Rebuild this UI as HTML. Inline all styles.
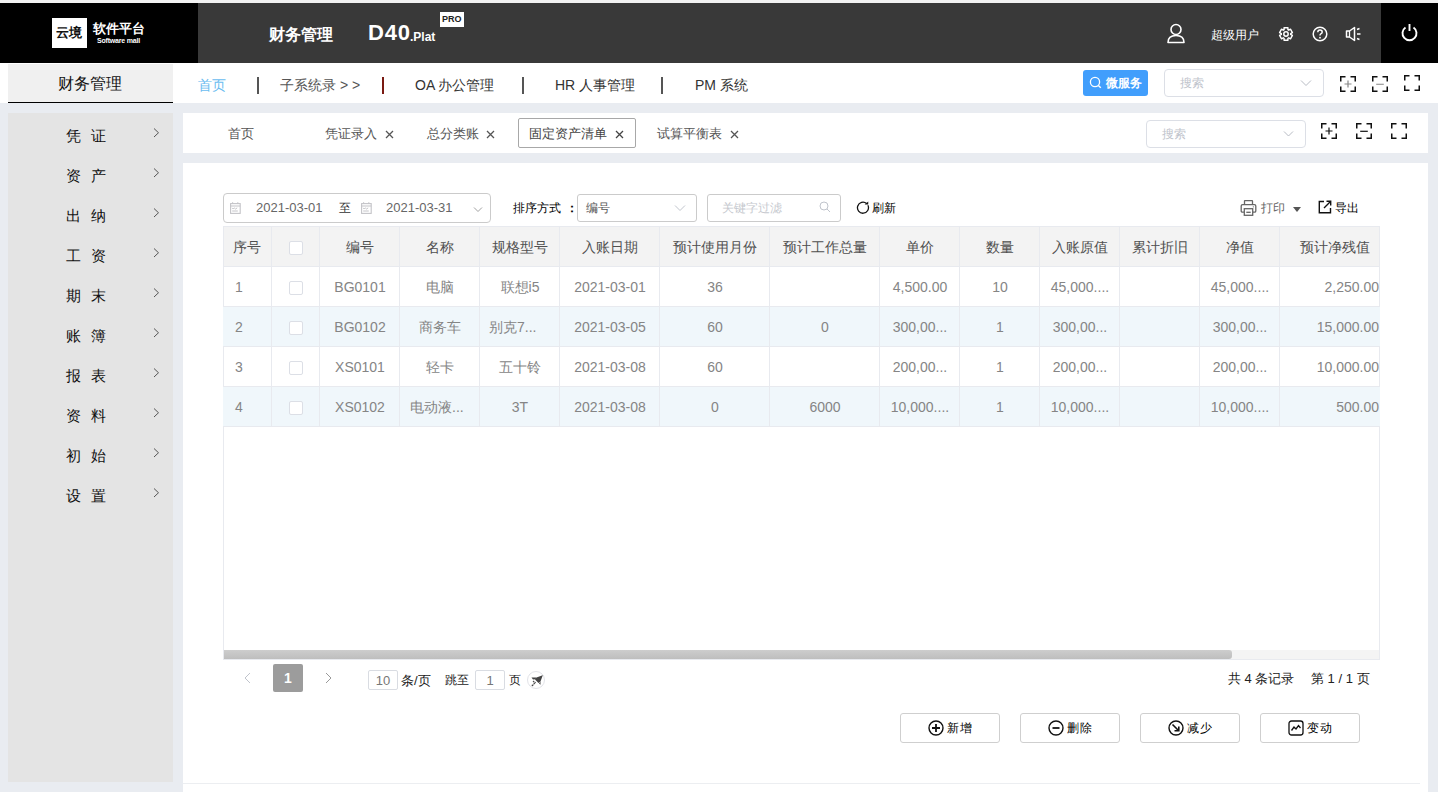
<!DOCTYPE html>
<html><head><meta charset="utf-8">
<style>
*{box-sizing:border-box;margin:0;padding:0}
html,body{width:1438px;height:792px;overflow:hidden}
body{position:relative;background:#e9ecf1;font-family:"Liberation Sans",sans-serif;color:#333}
.a{position:absolute}
.t{position:absolute;white-space:nowrap;line-height:1}
</style></head><body>
<div class="a" style="left:0px;top:0px;width:1438px;height:3px;background:#f2f2f2"></div>
<div class="a" style="left:0px;top:3px;width:1438px;height:60px;background:#393939"></div>
<div class="a" style="left:0px;top:3px;width:198px;height:60px;background:#000"></div>
<div class="a" style="left:1381px;top:3px;width:57px;height:60px;background:#000"></div>
<div class="a" style="left:0px;top:63px;width:1438px;height:40px;background:#fff"></div>
<div class="a" style="left:8px;top:64px;width:165px;height:39px;background:#f0f0f0;border-bottom:1px solid #000"></div>
<div class="a" style="left:8px;top:113px;width:165px;height:669px;background:#e4e4e4"></div>
<div class="a" style="left:183px;top:113px;width:1245px;height:40px;background:#fff"></div>
<div class="a" style="left:183px;top:163px;width:1245px;height:629px;background:#fff"></div>
<div class="a" style="left:183px;top:153px;width:1237px;height:10px;background:#e9ecf1"></div>
<div class="a" style="left:183px;top:783px;width:1237px;height:1px;background:#eceef1"></div>
<div class="a" style="left:52px;top:18px;width:35px;height:30px;background:#fff"></div>
<div class="t" style="left:56px;top:26px;font-size:13px;color:#111;font-weight:bold">云境</div>
<div class="t" style="left:93px;top:22px;font-size:13px;color:#fff;font-weight:bold">软件平台</div>
<div class="t" style="left:97px;top:37px;font-size:7px;color:#fff;font-weight:bold;letter-spacing:-0.2px">Software mall</div>
<div class="t" style="left:269px;top:27px;font-size:16px;color:#fff;font-weight:bold">财务管理</div>
<div class="t" style="left:368px;top:22px;font-size:22px;color:#fff;font-weight:bold;letter-spacing:0.8px">D40</div>
<div class="t" style="left:410px;top:31px;font-size:12px;color:#fff;font-weight:bold">.Plat</div>
<div class="a" style="left:440px;top:12px;width:24px;height:15px;background:#fff"></div>
<div class="t" style="left:442px;top:15px;font-size:9px;color:#222;font-weight:bold">PRO</div>
<svg class="a" style="left:1166px;top:23px" width="20" height="21" viewBox="0 0 20 21"><circle cx="10" cy="6.5" r="5" fill="none" stroke="#fff" stroke-width="1.6"/><path d="M2 19.5 Q2 12.5 10 12.5 Q18 12.5 18 19.5 Z" fill="none" stroke="#fff" stroke-width="1.6" stroke-linejoin="round"/></svg>
<div class="t" style="left:1211px;top:29px;font-size:12px;color:#fff;">超级用户</div>
<svg class="a" style="left:1278px;top:26px" width="16" height="16" viewBox="0 0 16 16"><path d="M5.40 3.50 L5.88 3.25 L5.84 1.03 L10.16 1.03 L10.12 3.25 L10.60 3.50 L11.05 3.79 L12.96 2.64 L15.12 6.38 L13.17 7.46 L13.20 8.00 L13.17 8.54 L15.12 9.62 L12.96 13.36 L11.05 12.21 L10.60 12.50 L10.12 12.75 L10.16 14.97 L5.84 14.97 L5.88 12.75 L5.40 12.50 L4.95 12.21 L3.04 13.36 L0.88 9.62 L2.83 8.54 L2.80 8.00 L2.83 7.46 L0.88 6.38 L3.04 2.64 L4.95 3.79 Z" transform="translate(8 8) scale(0.9) translate(-8 -8)" fill="none" stroke="#fff" stroke-width="1.6" stroke-linejoin="round"/><circle cx="8" cy="8" r="2.2" fill="none" stroke="#fff" stroke-width="1.5"/></svg>
<svg class="a" style="left:1312px;top:26px" width="16" height="16" viewBox="0 0 16 16"><circle cx="8" cy="8" r="6.8" fill="none" stroke="#fff" stroke-width="1.5"/><path d="M5.8 6.2 Q5.8 4 8 4 Q10.2 4 10.2 6 Q10.2 7.3 8.8 7.9 Q8 8.3 8 9.6" fill="none" stroke="#fff" stroke-width="1.5"/><circle cx="8" cy="11.7" r="0.9" fill="#fff"/></svg>
<svg class="a" style="left:1345px;top:26px" width="17" height="16" viewBox="0 0 17 16"><path d="M1.5 5 H4.5 L9.5 1.5 V14.5 L4.5 11 H1.5 Z" fill="none" stroke="#fff" stroke-width="1.5" stroke-linejoin="round"/><path d="M4.5 5 V11" stroke="#fff" stroke-width="1.3"/><path d="M12 3.5 L14.5 2.5 M12 8 H15.5 M12 12.5 L14.5 13.5" stroke="#fff" stroke-width="1.4"/></svg>
<svg class="a" style="left:1400px;top:23px" width="19" height="20" viewBox="0 0 19 20"><path d="M5.5 4.46 A7 7 0 1 0 13.5 4.46" fill="none" stroke="#fff" stroke-width="1.9" stroke-linecap="butt"/><path d="M9.5 1 V8" stroke="#fff" stroke-width="1.9"/></svg>
<div class="t" style="left:58px;top:76px;font-size:16px;color:#111;">财务管理</div>
<div class="t" style="left:198px;top:78px;font-size:14px;color:#6abcf0;">首页</div>
<div class="a" style="left:257px;top:77px;width:2px;height:17px;background:#555"></div>
<div class="t" style="left:280px;top:78px;font-size:14px;color:#555;">子系统录 &gt; &gt;</div>
<div class="a" style="left:382px;top:77px;width:2px;height:17px;background:#7a1a12"></div>
<div class="t" style="left:415px;top:78px;font-size:14px;color:#333;">OA 办公管理</div>
<div class="a" style="left:522px;top:77px;width:2px;height:17px;background:#555"></div>
<div class="t" style="left:555px;top:78px;font-size:14px;color:#333;">HR 人事管理</div>
<div class="a" style="left:661px;top:77px;width:2px;height:17px;background:#555"></div>
<div class="t" style="left:695px;top:78px;font-size:14px;color:#333;">PM 系统</div>
<div class="a" style="left:1083px;top:70px;width:65px;height:26px;background:#419efc;border-radius:3px"></div>
<svg class="a" style="left:1089px;top:76px" width="13" height="13" viewBox="0 0 13 13"><circle cx="6" cy="6" r="4.6" fill="none" stroke="#fff" stroke-width="1.3"/><path d="M9.4 9.4 L11.8 11.8" stroke="#fff" stroke-width="1.4"/></svg>
<div class="t" style="left:1106px;top:77px;font-size:12px;color:#fff;font-weight:bold">微服务</div>
<div class="a" style="left:1164px;top:69px;width:160px;height:28px;border:1px solid #dcdfe6;border-radius:4px;background:#fff"></div>
<div class="t" style="left:1180px;top:77px;font-size:12px;color:#c0c4cc;">搜索</div>
<svg class="a" style="left:1300px;top:79px" width="12" height="8" viewBox="0 0 12 8"><path d="M1 1.5 L6 6.5 L11 1.5" fill="none" stroke="#b8bcc4" stroke-width="1"/></svg>
<div class="t" style="left:66px;top:128px;font-size:15px;color:#111;">凭</div>
<div class="t" style="left:91px;top:128px;font-size:15px;color:#111;">证</div>
<svg class="a" style="left:153px;top:128px" width="7" height="10" viewBox="0 0 7 10"><path d="M1 0.5 L5.5 4.75 L1 9" fill="none" stroke="#555" stroke-width="1"/></svg>
<div class="t" style="left:66px;top:168px;font-size:15px;color:#111;">资</div>
<div class="t" style="left:91px;top:168px;font-size:15px;color:#111;">产</div>
<svg class="a" style="left:153px;top:168px" width="7" height="10" viewBox="0 0 7 10"><path d="M1 0.5 L5.5 4.75 L1 9" fill="none" stroke="#555" stroke-width="1"/></svg>
<div class="t" style="left:66px;top:208px;font-size:15px;color:#111;">出</div>
<div class="t" style="left:91px;top:208px;font-size:15px;color:#111;">纳</div>
<svg class="a" style="left:153px;top:208px" width="7" height="10" viewBox="0 0 7 10"><path d="M1 0.5 L5.5 4.75 L1 9" fill="none" stroke="#555" stroke-width="1"/></svg>
<div class="t" style="left:66px;top:248px;font-size:15px;color:#111;">工</div>
<div class="t" style="left:91px;top:248px;font-size:15px;color:#111;">资</div>
<svg class="a" style="left:153px;top:248px" width="7" height="10" viewBox="0 0 7 10"><path d="M1 0.5 L5.5 4.75 L1 9" fill="none" stroke="#555" stroke-width="1"/></svg>
<div class="t" style="left:66px;top:288px;font-size:15px;color:#111;">期</div>
<div class="t" style="left:91px;top:288px;font-size:15px;color:#111;">末</div>
<svg class="a" style="left:153px;top:288px" width="7" height="10" viewBox="0 0 7 10"><path d="M1 0.5 L5.5 4.75 L1 9" fill="none" stroke="#555" stroke-width="1"/></svg>
<div class="t" style="left:66px;top:328px;font-size:15px;color:#111;">账</div>
<div class="t" style="left:91px;top:328px;font-size:15px;color:#111;">簿</div>
<svg class="a" style="left:153px;top:328px" width="7" height="10" viewBox="0 0 7 10"><path d="M1 0.5 L5.5 4.75 L1 9" fill="none" stroke="#555" stroke-width="1"/></svg>
<div class="t" style="left:66px;top:368px;font-size:15px;color:#111;">报</div>
<div class="t" style="left:91px;top:368px;font-size:15px;color:#111;">表</div>
<svg class="a" style="left:153px;top:368px" width="7" height="10" viewBox="0 0 7 10"><path d="M1 0.5 L5.5 4.75 L1 9" fill="none" stroke="#555" stroke-width="1"/></svg>
<div class="t" style="left:66px;top:408px;font-size:15px;color:#111;">资</div>
<div class="t" style="left:91px;top:408px;font-size:15px;color:#111;">料</div>
<svg class="a" style="left:153px;top:408px" width="7" height="10" viewBox="0 0 7 10"><path d="M1 0.5 L5.5 4.75 L1 9" fill="none" stroke="#555" stroke-width="1"/></svg>
<div class="t" style="left:66px;top:448px;font-size:15px;color:#111;">初</div>
<div class="t" style="left:91px;top:448px;font-size:15px;color:#111;">始</div>
<svg class="a" style="left:153px;top:448px" width="7" height="10" viewBox="0 0 7 10"><path d="M1 0.5 L5.5 4.75 L1 9" fill="none" stroke="#555" stroke-width="1"/></svg>
<div class="t" style="left:66px;top:488px;font-size:15px;color:#111;">设</div>
<div class="t" style="left:91px;top:488px;font-size:15px;color:#111;">置</div>
<svg class="a" style="left:153px;top:488px" width="7" height="10" viewBox="0 0 7 10"><path d="M1 0.5 L5.5 4.75 L1 9" fill="none" stroke="#555" stroke-width="1"/></svg>
<div class="t" style="left:228px;top:127px;font-size:13px;color:#555;">首页</div>
<div class="t" style="left:325px;top:127px;font-size:13px;color:#555;">凭证录入</div>
<svg class="a" style="left:385px;top:130px" width="9" height="9" viewBox="0 0 9 9"><path d="M1 1 L8 8 M8 1 L1 8" stroke="#555" stroke-width="1.3"/></svg>
<div class="t" style="left:427px;top:127px;font-size:13px;color:#555;">总分类账</div>
<svg class="a" style="left:486px;top:130px" width="9" height="9" viewBox="0 0 9 9"><path d="M1 1 L8 8 M8 1 L1 8" stroke="#555" stroke-width="1.3"/></svg>
<div class="a" style="left:518px;top:118px;width:118px;height:30px;border:1px solid #a8a8a8;border-radius:2px"></div>
<div class="t" style="left:529px;top:127px;font-size:13px;color:#444;">固定资产清单</div>
<svg class="a" style="left:615px;top:130px" width="9" height="9" viewBox="0 0 9 9"><path d="M1 1 L8 8 M8 1 L1 8" stroke="#444" stroke-width="1.3"/></svg>
<div class="t" style="left:657px;top:127px;font-size:13px;color:#555;">试算平衡表</div>
<svg class="a" style="left:730px;top:130px" width="9" height="9" viewBox="0 0 9 9"><path d="M1 1 L8 8 M8 1 L1 8" stroke="#555" stroke-width="1.3"/></svg>
<div class="a" style="left:1146px;top:120px;width:160px;height:28px;border:1px solid #dcdfe6;border-radius:4px;background:#fff"></div>
<div class="t" style="left:1162px;top:128px;font-size:12px;color:#c0c4cc;">搜索</div>
<svg class="a" style="left:1283px;top:130px" width="12" height="8" viewBox="0 0 12 8"><path d="M1 1.5 L5.5 6 L10 1.5" fill="none" stroke="#b8bcc4" stroke-width="1"/></svg>
<svg class="a" style="left:1340px;top:76px" width="16" height="16" viewBox="0 0 16 16"><path d="M0.75 5.5 V0.75 H5.5 M10.5 0.75 H15.25 V5.5 M15.25 10.5 V15.25 H10.5 M5.5 15.25 H0.75 V10.5" fill="none" stroke="#111" stroke-width="1.5"/><path d="M8 4.5 V11.5 M4.5 8 H11.5" stroke="#888" stroke-width="1.2"/></svg>
<svg class="a" style="left:1372px;top:76px" width="16" height="16" viewBox="0 0 16 16"><path d="M0.75 5.5 V0.75 H5.5 M10.5 0.75 H15.25 V5.5 M15.25 10.5 V15.25 H10.5 M5.5 15.25 H0.75 V10.5" fill="none" stroke="#111" stroke-width="1.5"/><path d="M4.2 8.3 H11.8" stroke="#999" stroke-width="1.2"/></svg>
<svg class="a" style="left:1404px;top:75px" width="16" height="16" viewBox="0 0 16 16"><path d="M0.75 5.5 V0.75 H5.5 M10.5 0.75 H15.25 V5.5 M15.25 10.5 V15.25 H10.5 M5.5 15.25 H0.75 V10.5" fill="none" stroke="#111" stroke-width="1.5"/></svg>
<svg class="a" style="left:1321px;top:123px" width="16" height="16" viewBox="0 0 16 16"><path d="M0.75 5.5 V0.75 H5.5 M10.5 0.75 H15.25 V5.5 M15.25 10.5 V15.25 H10.5 M5.5 15.25 H0.75 V10.5" fill="none" stroke="#111" stroke-width="1.5"/><path d="M8 4.5 V11.5 M4.5 8 H11.5" stroke="#111" stroke-width="1.2"/></svg>
<svg class="a" style="left:1356px;top:123px" width="16" height="16" viewBox="0 0 16 16"><path d="M0.75 5.5 V0.75 H5.5 M10.5 0.75 H15.25 V5.5 M15.25 10.5 V15.25 H10.5 M5.5 15.25 H0.75 V10.5" fill="none" stroke="#111" stroke-width="1.5"/><path d="M4.2 8.3 H11.8" stroke="#111" stroke-width="1.2"/></svg>
<svg class="a" style="left:1391px;top:123px" width="16" height="16" viewBox="0 0 16 16"><path d="M0.75 5.5 V0.75 H5.5 M10.5 0.75 H15.25 V5.5 M15.25 10.5 V15.25 H10.5 M5.5 15.25 H0.75 V10.5" fill="none" stroke="#111" stroke-width="1.5"/></svg>
<div class="a" style="left:223px;top:193px;width:268px;height:30px;border:1px solid #cbcbcb;border-radius:4px"></div>
<svg class="a" style="left:230px;top:202px" width="11" height="12" viewBox="0 0 11 12"><rect x="0.6" y="1.6" width="9.6" height="9.8" fill="none" stroke="#c4c4c8" stroke-width="1.1"/><path d="M0.6 4 H10.2 M2.6 0.3 V2 M7.8 0.3 V2" stroke="#c4c4c8" stroke-width="1.1"/><path d="M2.2 5.9 L3.2 7 L4.3 5.9 L5.5 7 L7.2 5.9 M2.2 9 H7.8" fill="none" stroke="#c4c4c8" stroke-width="1"/></svg>
<svg class="a" style="left:361px;top:202px" width="11" height="12" viewBox="0 0 11 12"><rect x="0.6" y="1.6" width="9.6" height="9.8" fill="none" stroke="#c4c4c8" stroke-width="1.1"/><path d="M0.6 4 H10.2 M2.6 0.3 V2 M7.8 0.3 V2" stroke="#c4c4c8" stroke-width="1.1"/><path d="M2.2 5.9 L3.2 7 L4.3 5.9 L5.5 7 L7.2 5.9 M2.2 9 H7.8" fill="none" stroke="#c4c4c8" stroke-width="1"/></svg>
<div class="t" style="left:256px;top:201px;font-size:13px;color:#666;">2021-03-01</div>
<div class="t" style="left:339px;top:202px;font-size:12px;color:#333;">至</div>
<div class="t" style="left:386px;top:201px;font-size:13px;color:#666;">2021-03-31</div>
<svg class="a" style="left:473px;top:207px" width="10" height="6" viewBox="0 0 10 6"><path d="M1 0.5 L5 4.5 L9 0.5" fill="none" stroke="#a0a0a0" stroke-width="1"/></svg>
<div class="t" style="left:513px;top:202px;font-size:12px;color:#000;">排序方式</div>
<div class="t" style="left:566px;top:202px;font-size:12px;color:#000;font-weight:bold">：</div>
<div class="a" style="left:577px;top:194px;width:120px;height:28px;border:1px solid #cbcbcb;border-radius:3px"></div>
<div class="t" style="left:586px;top:202px;font-size:12px;color:#555;">编号</div>
<svg class="a" style="left:674px;top:205px" width="12" height="7" viewBox="0 0 12 7"><path d="M1 0.5 L6 5.5 L11 0.5" fill="none" stroke="#c0c4cc" stroke-width="1"/></svg>
<div class="a" style="left:707px;top:194px;width:134px;height:28px;border:1px solid #cbcbcb;border-radius:3px"></div>
<div class="t" style="left:722px;top:202px;font-size:12px;color:#c5c8ce;">关键字过滤</div>
<svg class="a" style="left:819px;top:201px" width="12" height="12" viewBox="0 0 12 12"><circle cx="5" cy="5" r="4" fill="none" stroke="#c0c4cc" stroke-width="1"/><path d="M8 8 L11 11" stroke="#c0c4cc" stroke-width="1"/></svg>
<svg class="a" style="left:856px;top:201px" width="14" height="14" viewBox="0 0 14 14"><path d="M10.6 2.6 A5.5 5.5 0 1 0 11.9 4.3" fill="none" stroke="#111" stroke-width="1.3"/><path d="M8.6 3.4 L12.2 3.6 L12.3 0.6 Z" fill="#111"/></svg>
<div class="t" style="left:872px;top:202px;font-size:12px;color:#000;">刷新</div>
<svg class="a" style="left:1240px;top:200px" width="17" height="16" viewBox="0 0 17 16"><path d="M4.5 4.5 V1.2 Q4.5 0.7 5 0.7 H12 Q12.5 0.7 12.5 1.2 V4.5" fill="none" stroke="#666" stroke-width="1.3"/><path d="M4 12.2 H2.5 Q1.2 12.2 1.2 10.9 V6 Q1.2 4.6 2.6 4.6 H14.4 Q15.8 4.6 15.8 6 V10.9 Q15.8 12.2 14.5 12.2 H13" fill="none" stroke="#666" stroke-width="1.3"/><rect x="4.3" y="8.7" width="8.4" height="6.6" fill="none" stroke="#666" stroke-width="1.3"/><path d="M6.3 12.3 H10.7" stroke="#666" stroke-width="1.3"/><circle cx="13.3" cy="6.8" r="0.6" fill="#666"/></svg>
<div class="t" style="left:1261px;top:202px;font-size:12px;color:#666;">打印</div>
<svg class="a" style="left:1293px;top:207px" width="8" height="5" viewBox="0 0 8 5"><path d="M0 0 H8 L4 5 Z" fill="#555"/></svg>
<svg class="a" style="left:1318px;top:200px" width="14" height="14" viewBox="0 0 14 14"><path d="M6 1.5 H1.3 V12.7 H12.5 V8" fill="none" stroke="#111" stroke-width="1.4"/><path d="M6 8 L12.5 1.5 M8.5 1.3 H12.7 V5.5" fill="none" stroke="#111" stroke-width="1.4"/></svg>
<div class="t" style="left:1335px;top:202px;font-size:12px;color:#000;">导出</div>
<div class="a" style="left:223px;top:226px;width:1157px;height:40px;background:#f3f3f3"></div>
<div class="a" style="left:223px;top:226px;width:1157px;height:434px;border:1px solid #e8eaef"></div>
<div class="a" style="left:223px;top:306px;width:1157px;height:40px;background:#f0f7fb"></div>
<div class="a" style="left:223px;top:386px;width:1157px;height:40px;background:#f0f7fb"></div>
<div class="a" style="left:271px;top:226px;width:1px;height:200px;background:#e8eaef"></div>
<div class="a" style="left:319px;top:226px;width:1px;height:200px;background:#e8eaef"></div>
<div class="a" style="left:399px;top:226px;width:1px;height:200px;background:#e8eaef"></div>
<div class="a" style="left:479px;top:226px;width:1px;height:200px;background:#e8eaef"></div>
<div class="a" style="left:559px;top:226px;width:1px;height:200px;background:#e8eaef"></div>
<div class="a" style="left:659px;top:226px;width:1px;height:200px;background:#e8eaef"></div>
<div class="a" style="left:769px;top:226px;width:1px;height:200px;background:#e8eaef"></div>
<div class="a" style="left:879px;top:226px;width:1px;height:200px;background:#e8eaef"></div>
<div class="a" style="left:959px;top:226px;width:1px;height:200px;background:#e8eaef"></div>
<div class="a" style="left:1039px;top:226px;width:1px;height:200px;background:#e8eaef"></div>
<div class="a" style="left:1119px;top:226px;width:1px;height:200px;background:#e8eaef"></div>
<div class="a" style="left:1199px;top:226px;width:1px;height:200px;background:#e8eaef"></div>
<div class="a" style="left:1279px;top:226px;width:1px;height:200px;background:#e8eaef"></div>
<div class="a" style="left:223px;top:266px;width:1157px;height:1px;background:#e8eaef"></div>
<div class="a" style="left:223px;top:306px;width:1157px;height:1px;background:#e8eaef"></div>
<div class="a" style="left:223px;top:346px;width:1157px;height:1px;background:#e8eaef"></div>
<div class="a" style="left:223px;top:386px;width:1157px;height:1px;background:#e8eaef"></div>
<div class="a" style="left:223px;top:426px;width:1157px;height:1px;background:#e8eaef"></div>
<div class="t" style="left:233px;top:240px;font-size:14px;color:#505050;">序号</div>
<div class="t" style="left:320px;top:240px;width:80px;text-align:center;font-size:14px;color:#505050">编号</div>
<div class="t" style="left:400px;top:240px;width:80px;text-align:center;font-size:14px;color:#505050">名称</div>
<div class="t" style="left:480px;top:240px;width:80px;text-align:center;font-size:14px;color:#505050">规格型号</div>
<div class="t" style="left:560px;top:240px;width:100px;text-align:center;font-size:14px;color:#505050">入账日期</div>
<div class="t" style="left:660px;top:240px;width:110px;text-align:center;font-size:14px;color:#505050">预计使用月份</div>
<div class="t" style="left:770px;top:240px;width:110px;text-align:center;font-size:14px;color:#505050">预计工作总量</div>
<div class="t" style="left:880px;top:240px;width:80px;text-align:center;font-size:14px;color:#505050">单价</div>
<div class="t" style="left:960px;top:240px;width:80px;text-align:center;font-size:14px;color:#505050">数量</div>
<div class="t" style="left:1040px;top:240px;width:80px;text-align:center;font-size:14px;color:#505050">入账原值</div>
<div class="t" style="left:1120px;top:240px;width:80px;text-align:center;font-size:14px;color:#505050">累计折旧</div>
<div class="t" style="left:1200px;top:240px;width:80px;text-align:center;font-size:14px;color:#505050">净值</div>
<div class="t" style="left:1300px;top:240px;font-size:14px;color:#505050;">预计净残值</div>
<div class="a" style="left:289px;top:241px;width:14px;height:14px;border:1px solid #dcdfe6;border-radius:2px;background:#fff"></div>
<div class="t" style="left:235px;top:280px;font-size:14px;color:#858585;">1</div>
<div class="t" style="left:320px;top:280px;width:80px;text-align:center;font-size:14px;color:#858585">BG0101</div>
<div class="t" style="left:400px;top:280px;width:80px;text-align:center;font-size:14px;color:#858585">电脑</div>
<div class="t" style="left:480px;top:280px;width:80px;text-align:center;font-size:14px;color:#858585">联想i5</div>
<div class="t" style="left:560px;top:280px;width:100px;text-align:center;font-size:14px;color:#858585">2021-03-01</div>
<div class="t" style="left:660px;top:280px;width:110px;text-align:center;font-size:14px;color:#858585">36</div>
<div class="t" style="left:880px;top:280px;width:80px;text-align:center;font-size:14px;color:#858585">4,500.00</div>
<div class="t" style="left:960px;top:280px;width:80px;text-align:center;font-size:14px;color:#858585">10</div>
<div class="t" style="left:1040px;top:280px;width:80px;text-align:center;font-size:14px;color:#858585">45,000....</div>
<div class="t" style="left:1200px;top:280px;width:80px;text-align:center;font-size:14px;color:#858585">45,000....</div>
<div class="t" style="left:1279px;top:280px;width:100px;text-align:right;font-size:14px;color:#858585">2,250.00</div>
<div class="a" style="left:289px;top:281px;width:14px;height:14px;border:1px solid #dcdfe6;border-radius:2px;background:#fff"></div>
<div class="t" style="left:235px;top:320px;font-size:14px;color:#858585;">2</div>
<div class="t" style="left:320px;top:320px;width:80px;text-align:center;font-size:14px;color:#858585">BG0102</div>
<div class="t" style="left:400px;top:320px;width:80px;text-align:center;font-size:14px;color:#858585">商务车</div>
<div class="t" style="left:489px;top:320px;font-size:14px;color:#858585;">别克7...</div>
<div class="t" style="left:560px;top:320px;width:100px;text-align:center;font-size:14px;color:#858585">2021-03-05</div>
<div class="t" style="left:660px;top:320px;width:110px;text-align:center;font-size:14px;color:#858585">60</div>
<div class="t" style="left:770px;top:320px;width:110px;text-align:center;font-size:14px;color:#858585">0</div>
<div class="t" style="left:880px;top:320px;width:80px;text-align:center;font-size:14px;color:#858585">300,00...</div>
<div class="t" style="left:960px;top:320px;width:80px;text-align:center;font-size:14px;color:#858585">1</div>
<div class="t" style="left:1040px;top:320px;width:80px;text-align:center;font-size:14px;color:#858585">300,00...</div>
<div class="t" style="left:1200px;top:320px;width:80px;text-align:center;font-size:14px;color:#858585">300,00...</div>
<div class="t" style="left:1279px;top:320px;width:100px;text-align:right;font-size:14px;color:#858585">15,000.00</div>
<div class="a" style="left:289px;top:321px;width:14px;height:14px;border:1px solid #dcdfe6;border-radius:2px;background:#fff"></div>
<div class="t" style="left:235px;top:360px;font-size:14px;color:#858585;">3</div>
<div class="t" style="left:320px;top:360px;width:80px;text-align:center;font-size:14px;color:#858585">XS0101</div>
<div class="t" style="left:400px;top:360px;width:80px;text-align:center;font-size:14px;color:#858585">轻卡</div>
<div class="t" style="left:480px;top:360px;width:80px;text-align:center;font-size:14px;color:#858585">五十铃</div>
<div class="t" style="left:560px;top:360px;width:100px;text-align:center;font-size:14px;color:#858585">2021-03-08</div>
<div class="t" style="left:660px;top:360px;width:110px;text-align:center;font-size:14px;color:#858585">60</div>
<div class="t" style="left:880px;top:360px;width:80px;text-align:center;font-size:14px;color:#858585">200,00...</div>
<div class="t" style="left:960px;top:360px;width:80px;text-align:center;font-size:14px;color:#858585">1</div>
<div class="t" style="left:1040px;top:360px;width:80px;text-align:center;font-size:14px;color:#858585">200,00...</div>
<div class="t" style="left:1200px;top:360px;width:80px;text-align:center;font-size:14px;color:#858585">200,00...</div>
<div class="t" style="left:1279px;top:360px;width:100px;text-align:right;font-size:14px;color:#858585">10,000.00</div>
<div class="a" style="left:289px;top:361px;width:14px;height:14px;border:1px solid #dcdfe6;border-radius:2px;background:#fff"></div>
<div class="t" style="left:235px;top:400px;font-size:14px;color:#858585;">4</div>
<div class="t" style="left:320px;top:400px;width:80px;text-align:center;font-size:14px;color:#858585">XS0102</div>
<div class="t" style="left:410px;top:400px;font-size:14px;color:#858585;">电动液...</div>
<div class="t" style="left:480px;top:400px;width:80px;text-align:center;font-size:14px;color:#858585">3T</div>
<div class="t" style="left:560px;top:400px;width:100px;text-align:center;font-size:14px;color:#858585">2021-03-08</div>
<div class="t" style="left:660px;top:400px;width:110px;text-align:center;font-size:14px;color:#858585">0</div>
<div class="t" style="left:770px;top:400px;width:110px;text-align:center;font-size:14px;color:#858585">6000</div>
<div class="t" style="left:880px;top:400px;width:80px;text-align:center;font-size:14px;color:#858585">10,000....</div>
<div class="t" style="left:960px;top:400px;width:80px;text-align:center;font-size:14px;color:#858585">1</div>
<div class="t" style="left:1040px;top:400px;width:80px;text-align:center;font-size:14px;color:#858585">10,000....</div>
<div class="t" style="left:1200px;top:400px;width:80px;text-align:center;font-size:14px;color:#858585">10,000....</div>
<div class="t" style="left:1279px;top:400px;width:100px;text-align:right;font-size:14px;color:#858585">500.00</div>
<div class="a" style="left:289px;top:401px;width:14px;height:14px;border:1px solid #dcdfe6;border-radius:2px;background:#fff"></div>
<div class="a" style="left:224px;top:650px;width:1155px;height:9px;background:#f4f4f4"></div>
<div class="a" style="left:224px;top:650px;width:1008px;height:9px;background:linear-gradient(#cdcdcd,#bebebe);border-radius:0 3px 3px 0"></div>
<svg class="a" style="left:244px;top:672px" width="7" height="12" viewBox="0 0 7 12"><path d="M6 1 L1 6 L6 11" fill="none" stroke="#c0c4cc" stroke-width="1"/></svg>
<div class="a" style="left:273px;top:664px;width:30px;height:28px;background:#9c9c9c;border-radius:2px"></div>
<div class="t" style="left:273px;top:671px;width:30px;text-align:center;font-size:14px;font-weight:bold;color:#fff">1</div>
<svg class="a" style="left:325px;top:672px" width="7" height="12" viewBox="0 0 7 12"><path d="M1 1 L6 6 L1 11" fill="none" stroke="#999" stroke-width="1"/></svg>
<div class="a" style="left:368px;top:670px;width:30px;height:20px;border:1px solid #d9dce2;border-radius:2px"></div>
<div class="t" style="left:368px;top:674px;width:30px;text-align:center;font-size:13px;color:#777">10</div>
<div class="t" style="left:401px;top:674px;font-size:13px;color:#222;">条/页</div>
<div class="t" style="left:445px;top:674px;font-size:12px;color:#222;">跳至</div>
<div class="a" style="left:475px;top:670px;width:30px;height:20px;border:1px solid #d9dce2;border-radius:2px"></div>
<div class="t" style="left:475px;top:674px;width:30px;text-align:center;font-size:13px;color:#777">1</div>
<div class="t" style="left:509px;top:674px;font-size:12px;color:#222;">页</div>
<div class="a" style="left:527px;top:671px;width:18px;height:18px;border:1px solid #e2e3e8;border-radius:50%"></div>
<svg class="a" style="left:527px;top:671px" width="18" height="18" viewBox="0 0 18 18"><path d="M16.5 4.5 L15 4.5 L9.5 6.5 L8 8.5 L11.5 12 L13.5 10.5 L15.5 5 Z" fill="#444"/><path d="M9.5 6.5 L4.5 6.5 L6 8.5 L8.5 8.2 Z M13.5 10.5 L13.5 13.8 L12 12.5 Z" fill="#444"/><path d="M8.6 11.2 L6.5 13.3 M7.2 10 L6 11.2" stroke="#444" stroke-width="1.1"/><circle cx="5.5" cy="14.3" r="0.9" fill="#444"/></svg>
<div class="t" style="left:1228px;top:672px;font-size:13px;color:#222;">共 4 条记录</div>
<div class="t" style="left:1311px;top:672px;font-size:13px;color:#222;">第 1 / 1 页</div>
<div class="a" style="left:900px;top:713px;width:100px;height:30px;border:1px solid #cfcfcf;border-radius:3px;background:#fff"></div>
<svg class="a" style="left:928px;top:720px" width="16" height="16" viewBox="0 0 16 16"><circle cx="8" cy="8" r="7" fill="none" stroke="#111" stroke-width="1.4"/><path d="M8 4 V12 M4 8 H12" stroke="#111" stroke-width="1.8"/></svg>
<div class="t" style="left:947px;top:722px;font-size:12px;color:#000;letter-spacing:1px">新增</div>
<div class="a" style="left:1020px;top:713px;width:100px;height:30px;border:1px solid #cfcfcf;border-radius:3px;background:#fff"></div>
<svg class="a" style="left:1048px;top:720px" width="16" height="16" viewBox="0 0 16 16"><circle cx="8" cy="8" r="7" fill="none" stroke="#111" stroke-width="1.4"/><path d="M4.5 8 H11.5" stroke="#111" stroke-width="1.8"/></svg>
<div class="t" style="left:1067px;top:722px;font-size:12px;color:#000;letter-spacing:1px">删除</div>
<div class="a" style="left:1140px;top:713px;width:100px;height:30px;border:1px solid #cfcfcf;border-radius:3px;background:#fff"></div>
<svg class="a" style="left:1168px;top:720px" width="16" height="16" viewBox="0 0 16 16"><circle cx="8" cy="8" r="7" fill="none" stroke="#111" stroke-width="1.4"/><path d="M4.5 4.5 L10.5 10.5 M6.5 10.8 H10.8 V6.5" fill="none" stroke="#111" stroke-width="1.6"/></svg>
<div class="t" style="left:1187px;top:722px;font-size:12px;color:#000;letter-spacing:1px">减少</div>
<div class="a" style="left:1260px;top:713px;width:100px;height:30px;border:1px solid #cfcfcf;border-radius:3px;background:#fff"></div>
<svg class="a" style="left:1288px;top:720px" width="16" height="16" viewBox="0 0 16 16"><rect x="1" y="1" width="14" height="14" rx="2.5" fill="none" stroke="#111" stroke-width="1.3"/><path d="M3.5 10.5 L6 7 L8 9 L10.5 5.5 L12.5 8" fill="none" stroke="#111" stroke-width="1.3"/></svg>
<div class="t" style="left:1307px;top:722px;font-size:12px;color:#000;letter-spacing:1px">变动</div>
</body></html>
